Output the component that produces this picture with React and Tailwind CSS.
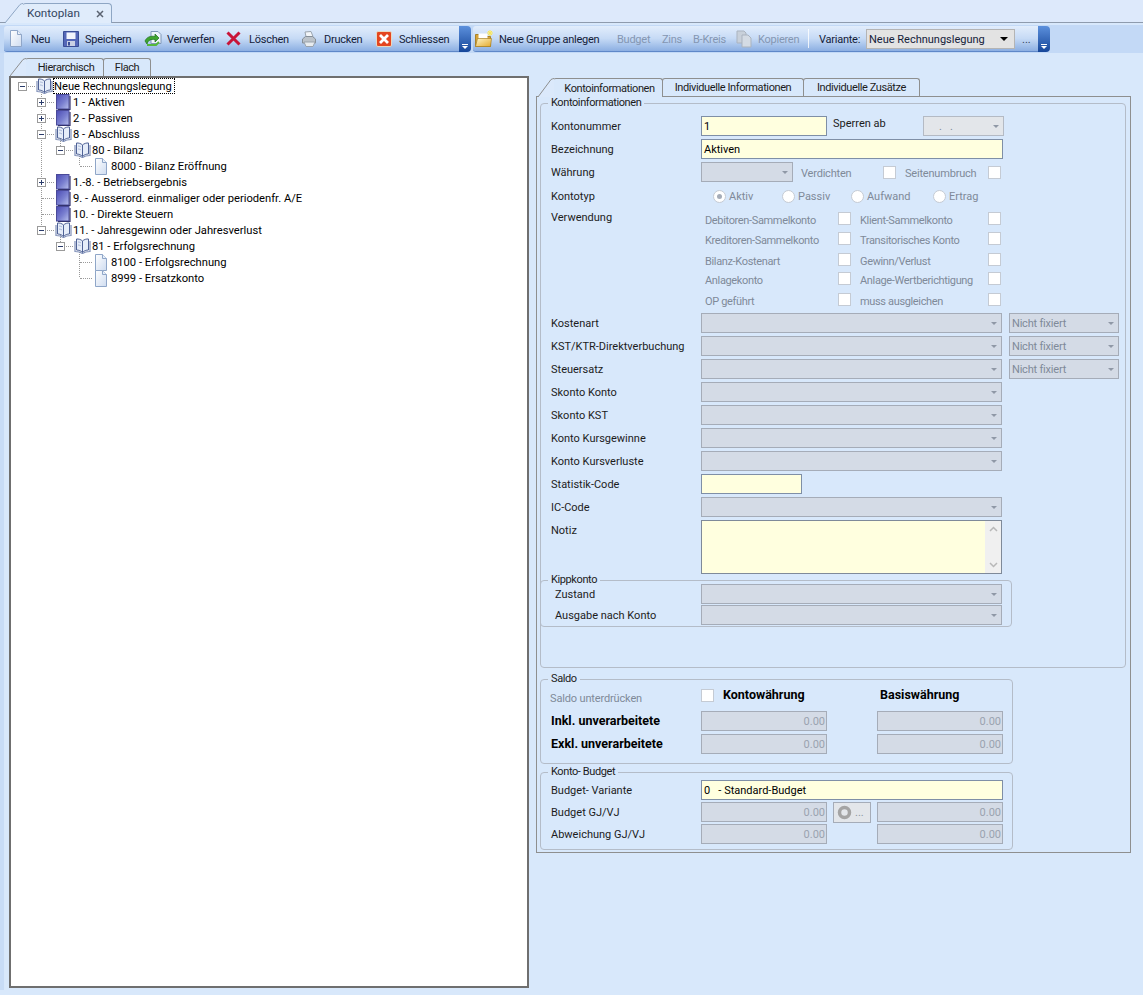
const IconDoc = () => (
  <svg width="14" height="17" viewBox="0 0 14 17" className="shrink-0"><defs><linearGradient id="dg" x1="0" y1="0" x2="1" y2="1"><stop offset="0" stopColor="#ffffff"/><stop offset="1" stopColor="#cfdcf0"/></linearGradient></defs><path d="M1.500 .5h7l4 4v12h-11z" fill="url(#dg)" stroke="#8fa6c8"/><path d="M8.500 .5v4h4" fill="#e8eff9" stroke="#8fa6c8"/></svg>
);
const IconBookClosed = () => (
  <svg width="15" height="16" viewBox="0 0 15 16" className="shrink-0"><defs><linearGradient id="bc" x1="0" y1="0" x2="1" y2="1"><stop offset="0" stopColor="#4a4ab4"/><stop offset=".55" stopColor="#7a80d0"/><stop offset="1" stopColor="#b8c0ec"/></linearGradient></defs><rect x=".5" y=".5" width="12.500" height="14.500" fill="url(#bc)" stroke="#4a4a98"/><path d="M14 2v13.500H2" fill="none" stroke="#33336e" strokeWidth="1.200"/></svg>
);
const IconBookOpen = () => (
  <svg width="17" height="16" viewBox="0 0 17 16" className="shrink-0"><path d="M8.500 3C7 1.500 4.500.8 2.500 1v11c2.200 0 4.500.8 6 2.500 1.500-1.700 3.800-2.500 6-2.500V1c-2-.2-4.500.5-6 2z" fill="#e6edf9" stroke="#4f6296"/><path d="M8.500 3v11.500" stroke="#4f6296"/><path d="M1 3v10.500c3 0 5.500.5 7.500 2 2-1.500 4.500-2 7.500-2V3" fill="none" stroke="#7f8fb8" strokeWidth="1.200"/><path d="M4 4c1.300 0 2.500.5 3 1M4 7c1.300 0 2.500.5 3 1" stroke="#a9b7d6" fill="none"/></svg>
);
const Expander = ({ open }) => (
  <span className="w-[9px] h-[9px] border border-[#9a9a9a] bg-white relative shrink-0 block">
    <span className="absolute left-[1px] top-[3px] w-[5px] h-[1px] bg-[#2a3b6a]" />
    {!open && <span className="absolute left-[3px] top-[1px] w-[1px] h-[5px] bg-[#2a3b6a]" />}
  </span>
);

const Tree = () => {
  const items = [
    { l: 0, kind: "open", exp: "open", t: "Neue Rechnungslegung", sel: true },
    { l: 1, kind: "closed", exp: "closed", t: "1 - Aktiven" },
    { l: 1, kind: "closed", exp: "closed", t: "2 - Passiven" },
    { l: 1, kind: "open", exp: "open", t: "8 - Abschluss" },
    { l: 2, kind: "open", exp: "open", t: "80 - Bilanz" },
    { l: 3, kind: "doc", t: "8000 - Bilanz Eröffnung" },
    { l: 1, kind: "closed", exp: "closed", t: "1.-8. - Betriebsergebnis" },
    { l: 1, kind: "closed", t: "9. - Ausserord. einmaliger oder periodenfr. A/E" },
    { l: 1, kind: "closed", t: "10. - Direkte Steuern" },
    { l: 1, kind: "open", exp: "open", t: "11. - Jahresgewinn oder Jahresverlust" },
    { l: 2, kind: "open", exp: "open", t: "81 - Erfolgsrechnung" },
    { l: 3, kind: "doc", t: "8100 - Erfolgsrechnung" },
    { l: 3, kind: "doc", t: "8999 - Ersatzkonto" },
  ];
  const pads = ["pl-[6px]", "pl-[25px]", "pl-[44px]", "pl-[63px]"];
  return (
    <div className="relative">
      <span className="absolute left-[30px] top-[12px] h-[139px] border-l border-dotted border-[#9a9a9a]" />
      <span className="absolute left-[49px] top-[60px] h-[8px] border-l border-dotted border-[#9a9a9a]" />
      <span className="absolute left-[68px] top-[76px] h-[11px] border-l border-dotted border-[#9a9a9a]" />
      <span className="absolute left-[49px] top-[156px] h-[8px] border-l border-dotted border-[#9a9a9a]" />
      <span className="absolute left-[68px] top-[172px] h-[27px] border-l border-dotted border-[#9a9a9a]" />
      {items.map((it, i) => (
        <div key={i} className={`h-[16px] flex items-center ${pads[it.l]} relative text-black`}>
          {it.exp ? (
            <>
              <span className="w-[11px] flex justify-center shrink-0"><Expander open={it.exp === "open"} /></span>
              <span className="w-[7px] border-t border-dotted border-[#9a9a9a] shrink-0" />
            </>
          ) : (
            <>
              <span className="w-[6px] shrink-0" />
              <span className="w-[12px] border-t border-dotted border-[#9a9a9a] shrink-0" />
            </>
          )}
          <span className="w-[18px] flex justify-center shrink-0">
            {it.kind === "open" ? <IconBookOpen /> : it.kind === "closed" ? <IconBookClosed /> : <IconDoc />}
          </span>
          <span className={`pl-[1px] pr-[3px] pt-[1px] leading-[15px] h-[16px] text-[11.2px] whitespace-nowrap ${it.sel ? "outline outline-dotted outline-1 outline-black -outline-offset-1" : ""}`}>{it.t}</span>
        </div>
      ))}
    </div>
  );
};

const ToolBtn = ({ icon, label, dis, w, gap }) => (
  <div className={`flex items-center h-full whitespace-nowrap shrink-0 tracking-[-0.25px] ${gap || "gap-[6px]"} ${dis ? "text-[#8496b2]" : "text-[#14213a]"} ${w}`}>{icon}<span className="pt-[2px]">{label}</span></div>
);
const Grip = () => (
  <div className="w-[12px] h-[26px] rounded-r-[4px] bg-gradient-to-b from-[#5c90dc] to-[#17479a] flex flex-col items-center justify-end pb-[3px] shrink-0">
    <span className="w-[6px] h-[1px] bg-white mb-[1px]" />
    <span className="w-0 h-0 border-l-[3px] border-r-[3px] border-t-[3px] border-l-transparent border-r-transparent border-t-white" />
  </div>
);
const Slant = ({ w, h }) => (
  <svg width={w} height={h} viewBox={`0 0 ${w} ${h}`} className="absolute right-full bottom-0 -mr-[1px]">
    <path d={`M0 ${h}L${w - 3} 1.500Q${w - 1} .5 ${w} .5V${h}z`} fill="#dbe9fb" />
    <path d={`M0 ${h}L${w - 3} 1.500Q${w - 1} .5 ${w} .5`} fill="none" stroke="#8e8f8f" />
  </svg>
);

const Arrow = () => (
  <span className="w-0 h-0 border-l-[3px] border-r-[3px] border-t-[3px] border-l-transparent border-r-transparent border-t-[#8f98a6]" />
);
const Combo = ({ w, children, cls }) => (
  <div className={`h-[20px] border border-[#a5acb8] bg-[#d4dbe6] flex items-center justify-between pr-[4px] pl-[2px] text-[#7f8a99] shrink-0 ${w} ${cls || ""}`}>
    <span className="whitespace-nowrap tracking-[-0.2px]">{children}</span><Arrow />
  </div>
);
const YInput = ({ w, children }) => (
  <div className={`h-[20px] border border-[#7f8fa6] bg-[#ffffdf] flex items-center px-[2px] pt-[1px] text-black whitespace-nowrap shrink-0 ${w}`}>{children}</div>
);
const Num = () => (
  <div className="h-[20px] border border-[#a5acb8] bg-[#d4dbe6] flex items-center justify-end pr-[1px] text-[#9aa3b0] shrink-0 w-[126px]">0.00</div>
);
const Check = () => <span className="w-[13px] h-[13px] border border-[#c5cbd4] bg-white block shrink-0" />;
const Radio = ({ on }) => (
  <span className="w-[13px] h-[13px] rounded-full border border-[#c5cbd4] bg-white flex items-center justify-center shrink-0">
    {on && <span className="w-[5px] h-[5px] rounded-full bg-[#a5acb8]" />}
  </span>
);
const Group = ({ title, cls, children }) => (
  <div className={`relative border border-[#b4bcc8] rounded-[4px] ${cls}`}>
    <span className="absolute -top-[8px] left-[7px] px-[3px] bg-[#d8e8fb] leading-[14px] text-[#1c1c1c] whitespace-nowrap tracking-[-0.4px]">{title}</span>
    {children}
  </div>
);
const Label = ({ children, pl = "pl-[10px]", bold }) => (
  <span className={`w-[160px] shrink-0 ${pl} whitespace-nowrap ${bold ? "font-bold text-[12.5px] text-black" : "text-[#1c1c1c]"}`}>{children}</span>
);
const Row = ({ label, children, cls }) => (
  <div className={`flex items-center h-[20px] ${cls || "mb-[3px]"}`}>
    <Label>{label}</Label>
    {children}
  </div>
);
const UseRow = ({ a, b, cls }) => (
  <div className={`flex items-center h-[13px] text-[#7f8a99] tracking-[-0.35px] ${cls || ""}`}>
    <span className="ml-[164px] w-[133px] whitespace-nowrap shrink-0 pt-[3px]">{a}</span>
    <Check />
    <span className="ml-[9px] w-[128px] whitespace-nowrap shrink-0 pt-[3px]">{b}</span>
    <Check />
  </div>
);
const NF = () => <Combo w="w-[110px] ml-[7px]">Nicht fixiert</Combo>;

const Tab = ({ children, w, first, active, cls }) => (
  <div className={`relative h-[18px] border border-b-0 border-[#8e8f8f] rounded-t-[3px] flex items-center justify-center whitespace-nowrap text-[#1c1c1c] bg-[#d8e8fb] tracking-[-0.4px] ${w} ${first ? "border-l-0 pl-[4px]" : "-ml-[1px]"} ${active ? "z-10 h-[19px] -mb-[1px]" : ""} ${cls || ""}`}>
    {first && <Slant w={16} h={active ? 19 : 18} />}
    {children}
  </div>
);

export default function App() {
  return (
    <div className="w-[1143px] h-[995px] bg-[#d8e8fb] overflow-hidden text-[11px] leading-none text-black flex flex-col" style={{ fontFamily: 'Roboto, "Liberation Sans", sans-serif' }}>
      <div className="h-[23px] flex items-end border-b border-[#8e9bad] bg-[#dde9fb] shrink-0">
        <div className="relative ml-[22px] w-[90px] h-[20px] -mb-[1px] border border-b-0 border-l-0 border-[#8ea6c4] rounded-t-[4px] bg-[#e0ecfb] flex items-center pl-[5px] pr-[7px] justify-between text-[11.7px] text-[#34465f]">
          <svg width="18" height="20" viewBox="0 0 18 20" className="absolute right-full bottom-0 -mr-[1px]">
            <path d="M0 20L15 1.500Q16.500 .5 18 .5V20z" fill="#e0ecfb" />
            <path d="M0 20L15 1.500Q16.500 .5 18 .5" fill="none" stroke="#8ea6c4" />
          </svg>
          <span>Kontoplan</span>
          <svg width="8" height="8" viewBox="0 0 8 8"><path d="M1 1l6 6M7 1l-6 6" stroke="#5a6270" strokeWidth="1.500"/></svg>
        </div>
      </div>
      <div className="h-[2px] shrink-0" />
      <div className="h-[28px] py-[1px] flex items-stretch bg-[#c3d9f6] shrink-0">
        <div className="ml-[4px] flex items-center h-[26px] rounded-l-[3px] bg-gradient-to-b from-[#e2edfc] via-[#c6daf5] to-[#8cafe2] border-b border-[#5f88c8] pl-[5px] w-[455px] shrink-0">
          <ToolBtn w="w-[54px]" label="Neu" icon={<IconDoc />} gap="gap-[8px]" />
          <ToolBtn w="w-[81px]" label="Speichern" icon={
            <svg width="16" height="16" viewBox="0 0 16 16" className="shrink-0"><path d="M.5.5h15v15H.5z" fill="#5468b8" stroke="#394d96"/><rect x="3.500" y="1.500" width="9" height="6.500" fill="#f2f5fc"/><rect x="4" y="10" width="8" height="5" fill="#c9d0e4"/><rect x="5" y="11" width="2" height="3.500" fill="#394d96"/></svg>
          } />
          <ToolBtn w="w-[82px]" label="Verwerfen" gap="gap-[5px]" icon={
            <svg width="18" height="16" viewBox="0 0 18 16" className="shrink-0"><path d="M7 .5h7l3 3v9H7z" fill="#eef4fb" stroke="#7f97b8"/><path d="M1 10c1.500-4 6-5.500 10-4.500V3l4 4-4 4V8.500C7 8 4 9 3 13z" fill="#3fa52f" stroke="#1d6e1b" strokeWidth=".7"/><path d="M3 14h9l3-3" fill="none" stroke="#55b83c" strokeWidth="2"/></svg>
          } />
          <ToolBtn w="w-[76px]" label="Löschen" gap="gap-[8px]" icon={
            <svg width="15" height="15" viewBox="0 0 15 15" className="shrink-0"><path d="M1.500 1.500l12 12M13.500 1.500l-12 12" stroke="#c81438" strokeWidth="3"/></svg>
          } />
          <ToolBtn w="w-[74px]" label="Drucken" gap="gap-[8px]" icon={
            <svg width="14" height="16" viewBox="0 0 14 16" className="shrink-0"><path d="M3 1l6-.5 2 5H4z" fill="#f2f5f8" stroke="#9aa3ad"/><path d="M.5 8l3-2.500h7l3 2.500v4h-13z" fill="#bcc3ca" stroke="#868f98"/><path d="M2 11l2 4.500h7l2-4.500z" fill="#e8ecef" stroke="#9aa3ad"/></svg>
          } />
          <ToolBtn w="w-[78px]" label="Schliessen" gap="gap-[7px]" icon={
            <svg width="16" height="16" viewBox="0 0 16 16" className="shrink-0"><rect x=".5" y=".5" width="15" height="15" rx="1.500" fill="#e4451f" stroke="#e8d8c0"/><path d="M4 4l8 8M12 4l-8 8" stroke="#fff" strokeWidth="2.800"/></svg>
          } />
        </div>
        <Grip />
        <div className="ml-[2px] flex items-center h-[26px] rounded-l-[3px] bg-gradient-to-b from-[#e2edfc] via-[#c6daf5] to-[#8cafe2] border-b border-[#5f88c8] pl-[2px] w-[565px] shrink-0">
          <ToolBtn w="w-[142px]" label="Neue Gruppe anlegen" icon={
            <svg width="18" height="17" viewBox="0 0 18 17" className="shrink-0"><defs><linearGradient id="fo" x1="0" y1="0" x2="1" y2="1"><stop offset="0" stopColor="#fff6c8"/><stop offset="1" stopColor="#e4a92c"/></linearGradient></defs><path d="M.5 4.500h6l1 2h8v10H.5z" fill="#d9a437" stroke="#a8822a"/><path d="M3.500 3.500h9v6h-9z" fill="#fff"/><path d="M.5 16.500l2-8h14l-1 8z" fill="url(#fo)" stroke="#a8822a" strokeWidth=".7"/><path d="M15 0v6M12 3h6M13 1l4 4M17 1l-4 4" stroke="#ffe94f" strokeWidth="1"/></svg>
          } />
          <ToolBtn dis w="w-[45px]" label="Budget" />
          <ToolBtn dis w="w-[31px]" label="Zins" />
          <ToolBtn dis w="w-[43px]" label="B-Kreis" />
          <ToolBtn dis w="w-[72px]" label="Kopieren" icon={
            <svg width="16" height="18" viewBox="0 0 16 18" className="shrink-0"><path d="M1 1h7l2 2v10H1z" fill="#c8d0da" stroke="#aab3bf"/><path d="M6 5h6l3 3v9H6z" fill="#d4dbe4" stroke="#aab3bf"/></svg>
          } />
          <span className="w-[1px] h-[19px] bg-white/80" />
          <span className="ml-[10px] w-[47px] pt-[2px] text-[#14213a] whitespace-nowrap tracking-[-0.25px]">Variante:</span>
          <div className="w-[149px] h-[20px] border border-[#b4b4b4] bg-[#e3e3e3] flex items-center justify-between pl-[2px] pr-[6px]">
            <span className="whitespace-nowrap pt-[1px] text-[#14213a]">Neue Rechnungslegung</span><span className="w-0 h-0 border-l-[4px] border-r-[4px] border-t-[4px] border-l-transparent border-r-transparent border-t-black" />
          </div>
          <span className="ml-[7px] pt-[2px] text-[#34445c]">...</span>
        </div>
        <Grip />
      </div>

      <div className="flex flex-1 min-h-0">
        <div className="w-[4px] h-[937px] bg-[#c8dcf6] shrink-0" />
        <div className="flex pt-[5px] pl-[5px]">
          <div className="w-[520px] shrink-0 flex flex-col">
            <div className="h-[18px] flex items-stretch pl-[16px]">
              <Tab first w="w-[79px]">Hierarchisch</Tab>
              <Tab w="w-[48px]">Flach</Tab>
            </div>
            <div className="w-[520px] h-[912px] bg-white border-2 border-[#6f6f6f]"><Tree /></div>
          </div>

          <div className="ml-[7px] w-[595px] shrink-0 pt-[20px] flex flex-col">
            <div className="h-[18px] flex items-stretch pl-[17px]">
              <Tab first active w="w-[110px]">Kontoinformationen</Tab>
              <Tab w="w-[142px]">Individuelle Informationen</Tab>
              <Tab w="w-[117px]">Individuelle Zusätze</Tab>
            </div>
            <div className="h-[757px] border border-[#8e8f8f] px-[3px] pt-[6px]">
              <Group title="Kontoinformationen" cls="w-[586px] h-[565px] pt-[12px]">
                <Row label="Kontonummer">
                  <YInput w="w-[126px]">1</YInput>
                  <span className="ml-[6px] -mt-[5px] w-[90px] text-[#1c1c1c]">Sperren ab</span>
                  <div className="h-[20px] w-[81px] border border-[#b4bac4] bg-[#e3e6ea] flex items-center justify-between px-[4px] text-[#7f8a99]"><span className="ml-[11px]">.&nbsp;&nbsp;&nbsp;.</span><Arrow /></div>
                </Row>
                <Row label="Bezeichnung"><YInput w="w-[302px]">Aktiven</YInput></Row>
                <Row label="Währung" cls="mb-[4px]">
                  <Combo w="w-[92px]" />
                  <span className="ml-[8px] w-[82px] text-[#7f8a99] mt-[3px] tracking-[-0.2px]">Verdichten</span><Check />
                  <span className="ml-[9px] w-[83px] text-[#7f8a99] mt-[3px] whitespace-nowrap tracking-[-0.2px]">Seitenumbruch</span><Check />
                </Row>
                <div className="flex items-center h-[20px] text-[#7f8a99]">
                  <Label>Kontotyp</Label>
                  <span className="ml-[12px]"><Radio on /></span><span className="ml-[3px] w-[53px] pt-[1px]">Aktiv</span>
                  <Radio /><span className="ml-[3px] w-[53px] pt-[1px]">Passiv</span>
                  <Radio /><span className="ml-[3px] w-[66px] pt-[1px]">Aufwand</span>
                  <Radio /><span className="ml-[3px] pt-[1px]">Ertrag</span>
                </div>
                <div className="relative h-[107px] pt-[6px]">
                  <span className="absolute left-[10px] top-[5px] leading-[14px] text-[#1c1c1c]">Verwendung</span>
                  <UseRow a="Debitoren-Sammelkonto" b="Klient-Sammelkonto" />
                  <UseRow a="Kreditoren-Sammelkonto" b="Transitorisches Konto" cls="mt-[7px]" />
                  <UseRow a="Bilanz-Kostenart" b="Gewinn/Verlust" cls="mt-[8px]" />
                  <UseRow a="Anlagekonto" b="Anlage-Wertberichtigung" cls="mt-[6px]" />
                  <UseRow a="OP geführt" b="muss ausgleichen" cls="mt-[8px]" />
                </div>
                <Row label="Kostenart"><Combo w="w-[301px]" /><NF /></Row>
                <Row label="KST/KTR-Direktverbuchung"><Combo w="w-[301px]" /><NF /></Row>
                <Row label="Steuersatz"><Combo w="w-[301px]" /><NF /></Row>
                <Row label="Skonto Konto"><Combo w="w-[301px]" /></Row>
                <Row label="Skonto KST"><Combo w="w-[301px]" /></Row>
                <Row label="Konto Kursgewinne"><Combo w="w-[301px]" /></Row>
                <Row label="Konto Kursverluste"><Combo w="w-[301px]" /></Row>
                <Row label="Statistik-Code"><YInput w="w-[101px]" /></Row>
                <Row label="IC-Code"><Combo w="w-[301px]" /></Row>
                <div className="flex h-[54px]">
                  <span className="w-[160px] pl-[10px] pt-[5px] text-[#1c1c1c]">Notiz</span>
                  <div className="w-[301px] h-[54px] border border-[#7f8a99] bg-[#ffffdf] flex justify-end">
                    <div className="w-[16px] bg-[#f0f0f0] flex flex-col justify-between items-center py-[5px]">
                      <svg width="9" height="6" viewBox="0 0 9 6"><path d="M1 5l3.500-3.500L8 5" fill="none" stroke="#b8b8b8" strokeWidth="1.500"/></svg>
                      <svg width="9" height="6" viewBox="0 0 9 6"><path d="M1 1l3.500 3.500L8 1" fill="none" stroke="#b8b8b8" strokeWidth="1.500"/></svg>
                    </div>
                  </div>
                </div>
                <Group title="Kippkonto" cls="mt-[6px] -ml-[1px] w-[472px] h-[47px] pt-[3px]">
                  <div className="flex items-center h-[20px]"><Label pl="pl-[14px]">Zustand</Label><Combo w="w-[301px]" /></div>
                  <div className="flex items-center h-[20px] mt-[1px]"><Label pl="pl-[14px]">Ausgabe nach Konto</Label><Combo w="w-[301px]" /></div>
                </Group>
              </Group>

              <Group title="Saldo" cls="mt-[11px] w-[473px] h-[85px]">
                <div className="flex items-start h-[31px] pt-[9px]">
                  <span className="w-[160px] pl-[9px] pt-[4px] text-[#7f8a99] tracking-[-0.15px]">Saldo unterdrücken</span>
                  <Check />
                  <span className="ml-[9px] w-[157px] font-bold text-[12.5px]">Kontowährung</span>
                  <span className="font-bold text-[12.5px]">Basiswährung</span>
                </div>
                <div className="flex items-center h-[20px] mb-[3px]"><Label bold>Inkl. unverarbeitete</Label><Num /><span className="w-[50px]" /><Num /></div>
                <div className="flex items-center h-[20px]"><Label bold>Exkl. unverarbeitete</Label><Num /><span className="w-[50px]" /><Num /></div>
              </Group>

              <Group title="Konto- Budget" cls="mt-[8px] w-[473px] h-[78px] pt-[7px]">
                <div className="flex items-center h-[20px] mb-[2px]"><Label>Budget- Variante</Label><YInput w="w-[302px]">0&nbsp;&nbsp;&nbsp;- Standard-Budget</YInput></div>
                <div className="flex items-center h-[20px] mb-[2px]"><Label>Budget GJ/VJ</Label><Num />
                  <div className="ml-[6px] w-[38px] h-[21px] border border-[#a5acb8] bg-[#e3e6ea] flex items-center pl-[3px] gap-[3px] text-[#8c95a2] shrink-0">
                    <svg width="15" height="15" viewBox="0 0 15 15"><circle cx="7.500" cy="7.500" r="5" fill="none" stroke="#a4a4a4" strokeWidth="3.500"/></svg><span>...</span>
                  </div>
                  <span className="ml-[6px]" /><Num />
                </div>
                <div className="flex items-center h-[20px]"><Label>Abweichung GJ/VJ</Label><Num /><span className="w-[50px]" /><Num /></div>
              </Group>
            </div>
          </div>
        </div>
      </div>
    </div>
  );
}
